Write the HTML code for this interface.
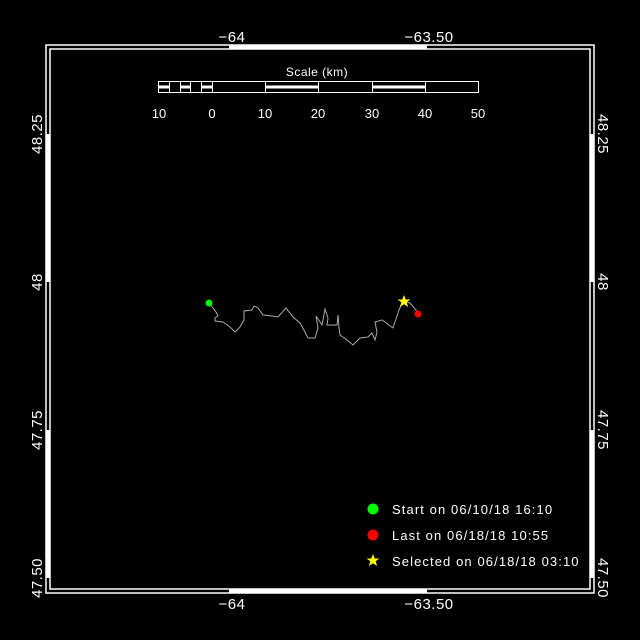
<!DOCTYPE html>
<html><head><style>
html,body{margin:0;padding:0;background:#000;width:640px;height:640px;overflow:hidden}
text{font-family:"Liberation Sans",sans-serif;fill:#fff}
</style></head><body>
<svg width="640" height="640" viewBox="0 0 640 640" xmlns="http://www.w3.org/2000/svg">
<rect width="640" height="640" fill="#000"/>
<g fill="none" stroke="#fff" stroke-width="1.5">
<rect x="46" y="45" width="548" height="548"/>
<rect x="50" y="49" width="540" height="540"/>
</g>
<g fill="#fff">
<rect x="229" y="45" width="198" height="4"/>
<rect x="229" y="589" width="198" height="4"/>
<rect x="46" y="134" width="4" height="148"/>
<rect x="46" y="430" width="4" height="148"/>
<rect x="590" y="134" width="4" height="148"/>
<rect x="590" y="430" width="4" height="148"/>
</g>
<g font-size="15" text-anchor="middle" letter-spacing="0.5">
<text x="232" y="42">−64</text>
<text x="429" y="42">−63.50</text>
<text x="232" y="609">−64</text>
<text x="429" y="609">−63.50</text>
</g>
<g font-size="15" text-anchor="middle" letter-spacing="0.5">
<text transform="translate(42,134) rotate(-90)">48.25</text>
<text transform="translate(42,282) rotate(-90)">48</text>
<text transform="translate(42,430) rotate(-90)">47.75</text>
<text transform="translate(42,578) rotate(-90)">47.50</text>
<text transform="translate(598,134) rotate(90)">48.25</text>
<text transform="translate(598,282) rotate(90)">48</text>
<text transform="translate(598,430) rotate(90)">47.75</text>
<text transform="translate(598,578) rotate(90)">47.50</text>
</g>
<text x="317" y="76" font-size="12" text-anchor="middle" letter-spacing="0.5">Scale (km)</text>
<g fill="#fff">
<rect x="158" y="85.5" width="11" height="3"/>
<rect x="180" y="85.5" width="10" height="3"/>
<rect x="201" y="85.5" width="11" height="3"/>
<rect x="265" y="85.5" width="53" height="3"/>
<rect x="372" y="85.5" width="53" height="3"/>
</g>
<g stroke="#fff" stroke-width="1" fill="none">
<rect x="158.5" y="81.5" width="320" height="11"/>
<path d="M169.5 81v12M180.5 81v12M190.5 81v12M201.5 81v12M212.5 81v12M265.5 81v12M318.5 81v12M372.5 81v12M425.5 81v12"/>
</g>
<g font-size="13" text-anchor="middle">
<text x="159" y="118">10</text><text x="212" y="118">0</text><text x="265" y="118">10</text>
<text x="318" y="118">20</text><text x="372" y="118">30</text><text x="425" y="118">40</text><text x="478" y="118">50</text>
</g>
<polyline fill="none" stroke="#aaa" stroke-width="1" points="209,303 213,308 216,312 218,316 215,318 215,321 223,322 230,327 235,332 240,327 244,320 244,311 252,310 254,306 258,308 263,315 272,316 278,317 286,308 293,317 300,323 305,332 308,338 315,338 318,328 316,316 322,325 325,309 328,318 327,325 337,325 338,315 339,328 340,335 347,340 353,345 360,338 368,337 372,333 375,340 377,332 375,322 382,320 393,328 395,322 399,310 403,301 410,303 416,310 418,314"/>
<circle cx="209" cy="303" r="3.5" fill="#0f0"/>
<circle cx="418" cy="314" r="3.5" fill="#f00"/>
<polygon fill="#ff0" points="404,295 405.8,299.5 410.5,299.5 406.7,302.3 408.1,307 404,304.2 399.9,307 401.3,302.3 397.5,299.5 402.2,299.5"/>
<circle cx="373" cy="509" r="5.5" fill="#0f0"/>
<circle cx="373" cy="535" r="5.5" fill="#f00"/>
<polygon fill="#ff0" points="373,554 374.8,558.5 379.5,558.5 375.7,561.3 377.1,566 373,563.2 368.9,566 370.3,561.3 366.5,558.5 371.2,558.5"/>
<g font-size="13" letter-spacing="1.1">
<text x="392" y="514">Start on 06/10/18 16:10</text>
<text x="392" y="540">Last on 06/18/18 10:55</text>
<text x="392" y="566">Selected on 06/18/18 03:10</text>
</g>
</svg>
</body></html>
